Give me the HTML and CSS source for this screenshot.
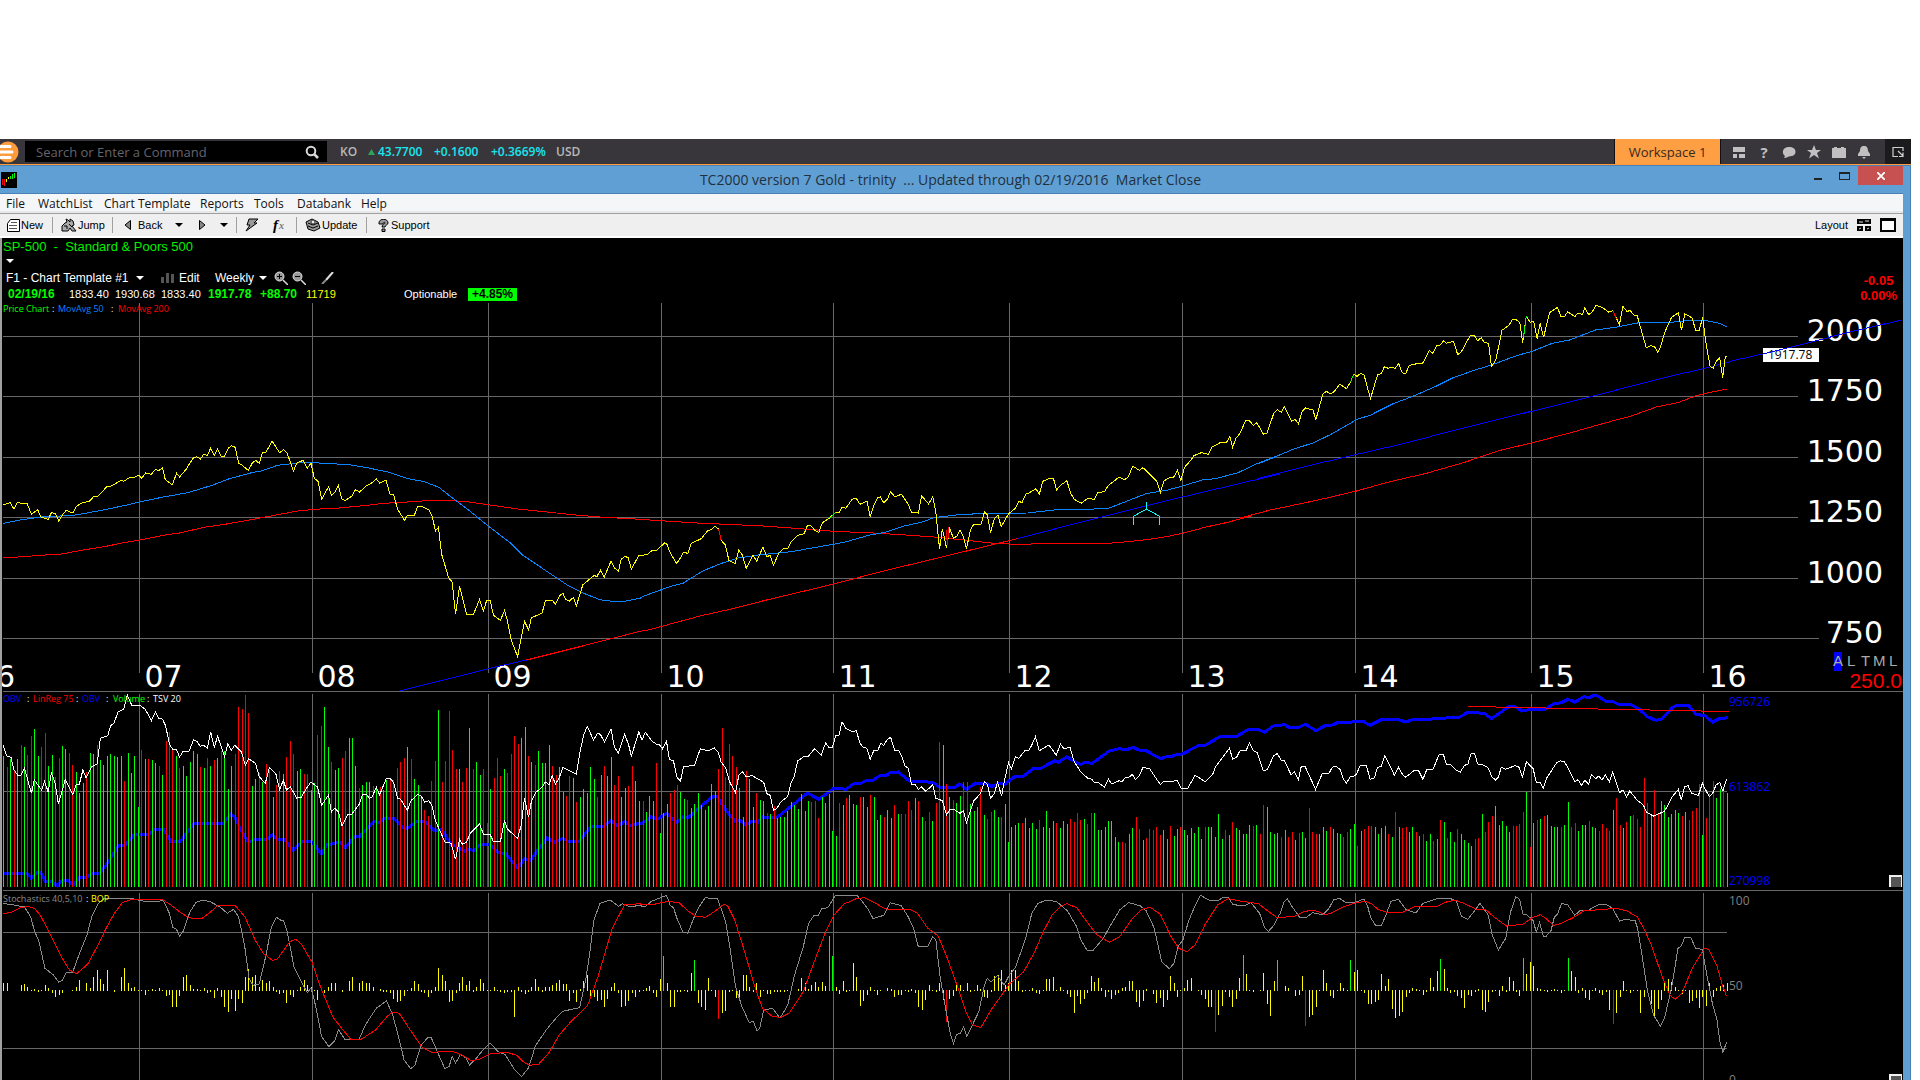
FILE: index.html
```html
<!DOCTYPE html>
<html lang="en">
<head>
<meta charset="utf-8">
<title>TC2000 version 7 Gold</title>
<link rel="stylesheet" href="styles.css">
</head>
<body>
<div class="app">
  <header class="topbar">
    <svg class="logo" viewBox="0 0 25 25"><circle cx="8" cy="13" r="10.5" fill="#fe9b3c"/><path d="M1 7.500H10M0 13H12M1 18.500H10" stroke="#fff" stroke-width="3" stroke-linecap="round"/></svg>
    <div class="search">
      <input type="text" aria-label="Command" placeholder="Search or Enter a Command">
      <svg viewBox="0 0 14 14" width="14" height="14"><circle cx="6" cy="6" r="4.300" fill="none" stroke="#d8d8d8" stroke-width="2"/><path d="M9 9l4 4" stroke="#d8d8d8" stroke-width="2.500"/></svg>
    </div>
    <div class="ticker">
      <span class="sym">KO</span>
      <svg viewBox="0 0 7 6" width="7" height="6"><path d="M0 6L3.500 0 7 6z" fill="#2fa35c"/></svg>
      <span>43.7700</span><span>+0.1600</span><span>+0.3669%</span><span class="sym">USD</span>
    </div>
    <button class="workspace">Workspace 1</button>
    <nav class="tools">
      <button aria-label="Panels"><svg viewBox="0 0 14 14"><path d="M1 2h12v5H1zM1 9h4v4H1zM7 9h6v4H7z"/></svg></button>
      <button aria-label="Help"><b>?</b></button>
      <button aria-label="Chat"><svg viewBox="0 0 14 14"><path d="M7 2c4 0 6.500 2 6.500 4.800S11 11.500 7 11.500c-1 0-2 1.500-5 1.500 1-1 1-2 .5-2.500C-.5 8 .5 2 7 2z"/></svg></button>
      <button aria-label="Favourites"><svg viewBox="0 0 14 14"><path d="M7 0l2 5h5l-4 3 2 5.500-5-3.500-5 3.500L4 8 0 5h5z"/></svg></button>
      <button aria-label="Briefcase"><svg viewBox="0 0 14 14"><path d="M0 3h2V2h3v1h4V2h3v1h2v10H0z"/></svg></button>
      <button aria-label="Alerts"><svg viewBox="0 0 14 14"><path d="M7 1c3 0 4 2 4 5l2 3v2H1V9l2-3c0-3 1-5 4-5zM5 12h4l-2 2z"/></svg></button>
    </nav>
    <button class="popout" aria-label="Pop out"><svg viewBox="0 0 12 12" width="12" height="12"><path d="M6 10.500H1v-9h10V5M6 5l5 5M11 6.500V10.500H7" fill="none" stroke="#d0d0d0" stroke-width="1.200"/></svg></button>
  </header>

  <div class="window">
    <div class="titlebar">
      <svg class="appicon" viewBox="0 0 16 16" width="16" height="16"><path d="M0 0h16v16H0z"/><path d="M1.500 7v6M3.500 7v7" stroke="red"/><path d="M5.500 7v3M7.500 5v2" stroke="#ff0"/><path d="M9.500 4v3M11.500 2v5M13.500 1v5" stroke="#0f0"/></svg>
      <h1>TC2000 version 7 Gold - trinity &nbsp;... Updated through 02/19/2016 &nbsp;Market Close</h1>
      <div class="winbtns">
        <button aria-label="Minimize"><i class="min"></i></button>
        <button aria-label="Maximize"><i class="max"></i></button>
        <button class="close" aria-label="Close"><svg viewBox="0 0 8 8" width="8" height="8"><path d="M0 0l8 8M8 0L0 8" stroke="#fff" stroke-width="1.800"/></svg></button>
      </div>
    </div>

    <div class="client">
      <nav class="menubar">
        <a href="#">File</a><a href="#">WatchList</a><a href="#">Chart Template</a><a href="#">Reports</a><a href="#">Tools</a><a href="#">Databank</a><a href="#">Help</a>
      </nav>
      <div class="toolbar">
        <button><svg viewBox="0 0 13 13" width="13" height="13"><path d="M3.500 .5h9v12h-12v-8z" fill="#fff" stroke="#000"/><path d="M4 3.500h6M2 6.500h8M2 9.500h8" stroke="#555"/></svg>New</button>
        <button class="sep"><svg viewBox="0 0 16 14" width="16" height="14"><path d="M1 13V8l3-3 2-1-1-3 2 1 2 2 0-3 3 2 1 4-2 1 4 5h-4l-2-3-2 3z" fill="#aaa" stroke="#000"/><path d="M3 8h3v3M8 6l3 3" stroke="#000" fill="none"/></svg>Jump</button>
        <button class="sep back"><svg viewBox="0 0 7 10" width="7" height="10"><path d="M6.500 .5v9L1 5z" fill="#888" stroke="#000"/></svg>Back</button>
        <button aria-label="Back history"><i class="caret"></i></button>
        <button aria-label="Forward"><svg viewBox="0 0 7 10" width="7" height="10"><path d="M.5 .5v9L6 5z" fill="#888" stroke="#000"/></svg></button>
        <button aria-label="Forward history"><i class="caret"></i></button>
        <button class="sep" aria-label="Scan"><svg viewBox="0 0 14 14" width="14" height="14"><path d="M4 1h9L9 5h3L1 13l4-6H2z" fill="#999" stroke="#000"/></svg></button>
        <button class="fx" aria-label="Formula">f<small>x</small></button>
        <button class="sep"><svg viewBox="0 0 16 14" width="16" height="14"><path d="M1 4l6-3 6 3 2 6-6 3-6-2z" fill="#999" stroke="#000"/><path d="M3 5l5 2 5-2M3 8l5 2 5-2" fill="none" stroke="#000"/><circle cx="8" cy="4" r="2" fill="#eee" stroke="#333"/></svg>Update</button>
        <button class="sep support"><svg viewBox="0 0 11 13" width="11" height="13"><path d="M1 4c0-5 9-5 9 0 0 2-3 2-3 4H4c0-3 3-3 3-4s-2-1-2 1H1zM4 10h3v2.500H4z" fill="#999" stroke="#000"/></svg>Support</button>
        <button class="layout">Layout <svg viewBox="0 0 14 12" width="14" height="12"><path d="M0 0h14v5H0zM0 7h6v5H0zM8 7h6v5H8z"/><path d="M2 3h4M8 2h4M2 10l2-1M10 10l2-1" stroke="#ddd"/></svg><i class="pane"></i></button>
      </div>

      <main class="charts">
        <section class="head">
          <div>
            <h2>SP-500 &nbsp;- &nbsp;Standard &amp; Poors 500</h2>
            <div class="more"><i class="caret"></i></div>
            <div class="row controls">
              <button>F1 - Chart Template #1</button><i class="caret"></i>
              <svg viewBox="0 0 14 10" width="14" height="10"><path d="M0 4h3v6H0zM5 0h3v10H5zM10 1h3v9h-3z" fill="#555"/></svg>
              <button>Edit</button><button>Weekly</button><i class="caret"></i>
              <svg viewBox="0 0 14 14" width="14" height="14"><circle cx="5.500" cy="5.500" r="4.500" fill="#999" stroke="#ddd"/><path d="M3 5.500h5M5.500 3v5" stroke="#000"/><path d="M9 9l5 5" stroke="#ddd" stroke-width="1.500"/></svg>
              <svg viewBox="0 0 14 14" width="14" height="14"><circle cx="5.500" cy="5.500" r="4.500" fill="#999" stroke="#ddd"/><path d="M3 5.500h5" stroke="#000"/><path d="M9 9l5 5" stroke="#ddd" stroke-width="1.500"/></svg>
              <svg viewBox="0 0 13 12" width="13" height="12"><path d="M12 0L5 8" stroke="#ddd" stroke-width="2"/><path d="M5 8l-4 4" stroke="#888" stroke-width="2"/></svg>
            </div>
            <div class="row quote">
              <b>02/19/16</b><span>1833.40</span><span>1930.68</span><span>1833.40</span><b>1917.78</b><b>+88.70</b><span class="vol">11719</span><span>Optionable</span><strong>+4.85%</strong>
            </div>
          </div>
          <div class="change"><span>-0.05</span><span>0.00%</span></div>
        </section>
        <svg id="price" class="plot" viewBox="2 303 1901 389"></svg>
        <svg id="volume" class="plot" viewBox="2 692 1901 199"></svg>
        <svg id="stoch" class="plot" viewBox="2 891 1901 197"></svg>
      </main>
    </div>
  </div>
</div>
<script src="chart.js"></script>
</body>
</html>
```
FILE: styles.css
```css
* { box-sizing: border-box; }
body {
  margin: 0;
  height: 100vh;
  overflow: hidden;
  background: #fff;
  font: 12px "Liberation Sans", Arial, sans-serif;
}
h1, h2 { margin: 0; font-weight: normal; }
button { margin: 0; padding: 0; border: 0; background: none; font: inherit; color: inherit; text-align: left; white-space: nowrap; }
.app { padding: 139px 9px 0 0; }

.topbar {
  display: flex;
  height: 26px;
  background: #38363b;
  border-bottom: 1px solid #fe9b3c;
  font: 12px "Open Sans", "Noto Sans", sans-serif;
}
.logo { width: 25px; height: 25px; }
.search {
  display: flex;
  align-items: center;
  width: 302px;
  height: 21px;
  margin-top: 2px;
  padding: 0 8px 0 11px;
  background: #000;
}
.search input {
  flex: 1;
  min-width: 0;
  padding: 0;
  border: 0;
  background: none;
  color: #aaa;
  font: 13px "Open Sans", sans-serif;
}
.search input::placeholder { color: #66646c; }
.ticker {
  flex: 1;
  display: grid;
  grid-template-columns: 28px 10px 56px 57px 65px auto;
  align-items: center;
  padding-left: 13px;
  color: #19e6ef;
  font-weight: 600;
}
.sym { color: #b8b8b8; }
.workspace {
  width: 107px;
  border-right: 1px solid #111;
  border-left: 1px solid #111;
  background: #fe9f43;
  color: #38281c;
  font-size: 13px;
  text-align: center;
}
.tools { display: flex; align-items: center; gap: 11px; width: 164px; padding-left: 11px; }
.tools button { width: 14px; height: 20px; color: #c0c0c0; text-align: center; font-size: 15px; line-height: 20px; }
.tools svg { display: block; width: 14px; height: 20px; fill: #c0c0c0; }
.popout { display: flex; align-items: center; justify-content: center; width: 26px; background: #1b1a1d; }

.window { padding-right: 7px; background: #609fd3; border-right: 1px solid #4a80b4; border-top: 1px solid #4a80b4; }
.titlebar { display: flex; height: 28px; border-bottom: 1px solid #4a80b4; }
.appicon { margin: 6px 0 0 1px; }
.titlebar h1 { flex: 1; padding-left: 80px; color: #22303e; font: 14px/27px "Open Sans", sans-serif; text-align: center; }
.winbtns { display: flex; }
.winbtns button { display: flex; align-items: center; justify-content: center; width: 27px; height: 19px; }
.winbtns .close { width: 45px; background: #c75050; }
.min { width: 8px; height: 2px; margin-top: 6px; background: #222; }
.max { width: 11px; height: 8px; border: 1px solid #222; border-top-width: 2px; }

.client { background: #efefef; }
.menubar {
  display: grid;
  grid-template-columns: 32px 66px 96px 54px 43px 64px auto;
  height: 19px;
  padding-left: 6px;
  overflow: hidden;
  background: #f4f6f8;
  border-bottom: 2px solid #e8e8e8;
  font: 12px/20px "Open Sans", sans-serif;
}
.menubar a { color: #111; text-decoration: none; white-space: nowrap; }
.toolbar {
  display: grid;
  grid-template-columns: 45px 60px 63px 24px 21px 16px 37px 23px 70px 1fr auto;
  align-items: center;
  height: 25px;
  padding: 0 7px;
  border-top: 1px solid #a0a0a0;
  border-bottom: 2px solid #fff;
  font-size: 11px;
}
.toolbar button { display: flex; align-items: center; gap: 1px; height: 16px; }
.toolbar .sep { padding-left: 8px; border-left: 1px solid #a0a0a0; }
.toolbar .back { gap: 7px; padding-left: 11px; }
.toolbar .support { gap: 2px; padding-left: 11px; }
.toolbar .fx { font: italic bold 15px "Liberation Serif", serif; }
.fx small { font-size: 10px; color: #777; }
.toolbar .layout { gap: 9px; }
.pane { width: 16px; height: 14px; border: 2px solid #000; border-top-width: 3px; background: #fff; }
.caret { width: 0; height: 0; border: 4px solid transparent; border-top: 4px solid currentColor; border-bottom: 0; }

.charts { background: #000; border-left: 2px solid #a0a0a0; color: #fff; }
.head { display: flex; justify-content: space-between; height: 65px; }
.head h2 { padding-left: 1px; color: #00f000; font-size: 13px; line-height: 17px; }
.more { display: flex; height: 14px; padding: 4px 0 0 4px; }
.row { display: grid; align-items: center; white-space: nowrap; }
.controls { grid-template-columns: 130px 25px 18px 36px 44px 15px 18px 29px auto; justify-content: start; height: 18px; padding-left: 4px; }
.quote { grid-template-columns: 61px 46px 46px 47px 52px 46px 98px 64px auto; justify-content: start; height: 14px; padding-left: 6px; font-size: 11px; }
.quote b { color: #0f0; font-size: 12px; }
.quote .vol { color: #ff0; }
.quote strong { padding: 0 4px; background: #0f0; color: #000; font-size: 12px; line-height: 13px; }
.change { display: flex; flex-direction: column; align-items: center; padding: 35px 6px 0 0; color: #f00; font-size: 13px; font-weight: bold; line-height: 15px; }
.plot { display: block; width: 100%; height: auto; overflow: hidden; }

.grid { stroke: #686868; fill: none; }
.line { fill: none; stroke-width: 1; }
.axis { font: 30px "DejaVu Sans", Verdana, sans-serif; fill: #fff; }
.legend { font: 9px "Open Sans", sans-serif; fill: #fff; }
.scale { font: 12px "Open Sans", sans-serif; }
.mode { font: 15px "Liberation Sans", Arial, sans-serif; fill: #aaa; }
.step { font: 21px "Liberation Sans", Arial, sans-serif; fill: #f00; }
```
FILE: chart.js
```js
const NS = 'http://www.w3.org/2000/svg';
const YEARS = [139.5, 312.5, 488.5, 661.5, 833.5, 1009.5, 1182.5, 1355.5, 1531.5, 1703.5];

function add(parent, name, attrs, text) {
  const el = document.createElementNS(NS, name);
  for (const k in attrs) el.setAttribute(k, attrs[k]);
  if (text !== undefined) el.textContent = text;
  document.getElementById(parent).appendChild(el);
  return el;
}
const grid = (id, d) => add(id, 'path', { d, class: 'grid', 'shape-rendering': 'crispEdges' });

// Samples are stored per block: origin of the block and samples per pixel on x; y is in thirds of a pixel.
const B = {
  a: [0, 300, 2.45], b: [640, 440, 2.45], c: [1240, 290, 2.306],
  d: [0, 680, 2.45], e: [640, 680, 2.45], f: [1280, 680, 2.45]
};
function pts(blocks) {
  const out = [];
  for (const k in blocks) {
    const [ox, oy, s] = B[k];
    blocks[k].trim().split(/\s+/).forEach(p => {
      const [x, y] = p.split(',').map(Number);
      out.push((ox + x / s).toFixed(1) + ',' + (oy + y / 3).toFixed(1));
    });
  }
  return out.join(' ');
}
const line = (id, colour, blocks, width = 1) =>
  add(id, 'polyline', { points: pts(blocks), class: 'line', stroke: colour, style: 'stroke-width:' + width, 'shape-rendering': 'crispEdges' });

/* ---------- price ---------- */
grid('price', YEARS.map(x => `M${x} 303V673`).join('') +
  'M3 336.500H1798M3 396.500H1798M3 457.500H1798M3 517.500H1798M3 578.500H1798M3 638.500H1819M3 691.500H1903');

[[2000, 341], [1750, 401], [1500, 462], [1250, 522], [1000, 583], [750, 643]].forEach(([t, y]) =>
  add('price', 'text', { x: 1883, y, 'text-anchor': 'end', class: 'axis' }, t));
['6', '07', '08', '09', '10', '11', '12', '13', '14', '15', '16'].forEach((t, i) =>
  add('price', 'text', { x: i ? YEARS[i - 1] + 5 : -4, y: 687, class: 'axis' }, t));

add('price', 'rect', { x: 1763, y: 348, width: 56, height: 14, fill: '#fff' });
add('price', 'text', { x: 1768, y: 359, class: 'scale' }, '1917.78');

line('price', '#f00', {
  a: '8,774 45,771 100,766 150,762 200,751 260,739 300,729 342,720 400,706 440,699 500,682 560,671 620,658 680,644 730,633 770,628 830,624 900,616 940,610 1010,605 1060,601 1110,602 1150,606 1200,615 1270,627 1340,636 1410,645 1480,652 1568,658',
  b: '60,243 140,249 230,254 290,257 370,264 474,274 570,279 640,284 720,291 800,301 860,309 920,313 1000,311 1110,312 1170,308 1240,299 1290,290 1329,280 1390,260 1440,247 1500,227',
  c: '0,684 70,660 140,641 190,627 266,604 340,577 430,550 520,516 600,481 672,459 760,429 850,396 900,379 960,351 1010,338 1050,318 1080,308 1123,297'
});
line('price', '#0a84ff', {
  a: '8,670 50,660 100,651 180,646 240,633 300,618 342,606 400,591 460,578 520,556 560,537 620,517 640,513 680,496 730,489 765,487 800,491 850,493 900,503 950,516 1000,536 1040,545 1075,562 1115,600 1150,632 1200,682 1250,728 1280,765 1330,806 1390,855 1430,880 1470,899 1500,904 1530,904 1568,895',
  b: '0,473 30,459 80,437 105,430 155,392 200,370 240,354 290,345 370,335 440,320 500,307 560,286 600,277 650,257 690,247 720,233 780,224 850,220 950,219 1020,209 1100,208 1150,204 1200,180 1240,161 1290,151 1329,138 1380,119 1410,116 1465,98 1510,72 1568,44',
  c: '40,522 70,507 120,479 170,458 210,433 270,388 300,376 350,343 400,318 450,290 490,264 540,241 580,225 640,196 672,185 720,160 760,150 820,120 870,111 920,98 980,99 1030,92 1080,93 1105,100 1123,110'
});
line('price', '#00f', { a: '980,1172 1130,1127 1200,1105 1290,1080' });
line('price', '#f00', { a: '1290,1080 1430,1037 1568,994', b: '20,570 150,527 220,508 310,480 400,454 474,432 600,392 760,345 870,312 925,296' });
line('price', '#00f', { b: '925,296 1050,256 1130,232 1200,209 1329,171 1430,142 1568,102', c: '40,566 172,523 266,494 380,460 464,431 600,387 672,364 800,323 880,296 1000,256 1069,236 1150,208 1206,192 1300,162 1400,128 1526,90' });
line('price', '#ff0', {
  a: '8,614 25,608 34,627 43,607 52,610 66,609 77,643 92,629 101,652 118,658 126,638 135,640 144,663 153,645 162,631 178,639 188,618 204,607 218,605 230,589 238,591 262,560 273,558 297,541 303,544 316,534 330,532 340,526 347,535 357,519 371,523 381,508 389,512 398,503 405,539 422,554 433,520 440,531 456,508 465,490 474,473 482,470 491,477 499,463 508,466 516,445 525,466 533,448 542,469 550,469 560,444 567,437 576,442 585,490 592,494 608,511 618,490 626,481 635,490 643,458 651,457 667,424 685,458 695,449 703,458 719,513 727,490 742,481 753,504 762,490 770,535 779,544 788,598 805,560 812,585 820,578 829,557 838,598 846,601 862,589 871,569 881,576 898,557 912,548 922,537 930,549 946,541 956,585 964,583 974,628 991,661 998,646 1015,646 1023,620 1036,621 1050,629 1058,645 1067,693 1074,682 1082,762 1099,833 1108,846 1116,942 1126,859 1143,943 1160,943 1175,898 1184,933 1192,903 1201,902 1209,946 1226,961 1236,932 1243,960 1252,1018 1268,1070 1285,964 1295,989 1302,953 1328,940 1336,903 1353,901 1361,912 1371,887 1379,880 1386,898 1395,903 1405,892 1412,918 1428,854 1455,827 1463,829 1471,811 1480,832 1497,784 1505,803 1515,814 1522,778 1531,769 1539,773 1547,808 1565,766',
  b: '0,346 18,344 30,331 41,331 60,309 65,310 74,338 90,371 100,352 106,337 117,340 126,310 150,296 166,272 175,269 183,259 192,266 199,301 209,315 218,362 233,371 242,331 251,345 260,385 277,346 286,364 301,322 311,350 319,346 327,376 340,340 352,325 362,325 370,307 387,286 402,281 410,257 418,256 428,271 438,277 447,248 462,236 480,217 488,217 495,202 504,205 520,178 530,175 539,193 556,183 564,230 574,193 582,174 589,170 597,188 606,178 614,155 624,170 641,163 657,193 665,217 682,219 690,167 707,192 717,170 725,218 734,328 741,266 751,325 759,266 768,295 776,289 784,269 792,289 800,326 810,268 818,252 835,255 844,215 851,225 859,278 868,236 877,226 885,260 903,221 920,205 928,184 936,188 945,163 954,158 970,146 978,163 987,124 1003,115 1013,116 1021,150 1029,137 1046,122 1055,160 1064,178 1081,190 1097,175 1113,178 1121,158 1138,155 1147,137 1173,112 1188,119 1197,109 1207,79 1224,91 1232,83 1248,101 1266,124 1275,157 1283,124 1293,115 1307,112 1317,91 1325,122 1334,82 1350,60 1357,47 1375,38 1392,43 1402,21 1420,9 1437,7 1445,-10 1452,22 1460,-5',
  c: '0,430 13,392 21,391 31,406 39,398 54,433 62,430 78,370 86,359 95,367 102,350 119,394 127,388 135,401 143,365 151,354 159,357 168,359 175,389 183,350 191,312 199,304 208,311 215,308 230,283 246,296 255,275 262,253 270,259 278,250 286,254 301,326 317,255 326,250 333,230 342,235 350,232 358,235 366,221 374,248 382,251 390,227 398,223 421,220 437,181 444,190 454,167 460,168 469,153 476,160 492,154 502,194 510,186 531,136 541,137 548,152 556,143 564,158 573,160 580,229 590,210 604,121 620,106 628,89 637,89 645,97 652,158 660,79 669,97 677,94 685,146 692,100 700,142 714,68 732,52 740,79 748,80 756,65 772,80 778,70 790,73 795,54 804,74 812,66 821,46 835,52 850,66 860,62 875,104 883,49 892,64 900,62 908,75 916,77 937,173 947,167 956,170 963,187 970,170 979,129 995,82 1011,68 1018,121 1026,72 1042,83 1051,121 1059,121 1067,82 1075,165 1084,229 1091,235 1099,212 1106,203 1113,263 1119,199 1123,199'
});
line('price', '#f00', { b: '192,266 199,301' });
line('price', '#f00', { b: '751,270 753,316 757,262' });
line('price', '#0f0', { b: '464,235 480,217' });
line('price', '#0f0', { c: '654,140 660,79' });
line('price', '#0f0', { c: '255,275 262,253' });
line('price', '#f00', { c: '860,62 868,86' });
line('price', '#0ff', { b: '1209,254 1209,229 1241,207 1241,187 1241,207 1273,229 1273,254' });

function legend(id, y, items) {
  items.forEach(([x, t, c]) => add(id, 'text', { x, y, class: 'legend', fill: c, style: 'fill:' + c }, t));
}
legend('price', 312, [[3, 'Price Chart', '#0f0'], [52, ':', '#fff'], [58, 'MovAvg 50', '#0a84ff'], [111, ':', '#fff'], [118, 'MovAvg 200', '#f00']]);
add('price', 'rect', { x: 1834, y: 652, width: 8, height: 19, fill: '#00f' });
[['A', 1833], ['L', 1847], ['T', 1861], ['M', 1873], ['L', 1889]].forEach(([t, x]) => add('price', 'text', { x, y: 666, class: 'mode' }, t));
add('price', 'text', { x: 1902, y: 688, 'text-anchor': 'end', class: 'step' }, '250.0');

/* ---------- bars ---------- */
const SPAN = [[3.3, 638.5], [642.5, 1277], [1281.3, 1726.6]];
function bars(id, list, draw) {
  list.forEach((s, n) => {
    const items = s.trim().split(/\s+/), [x0, x1] = SPAN[n];
    items.forEach((v, i) => {
      const x = Math.round(x0 + (x1 - x0) * i / (items.length - 1));
      const [top, bottom, fill] = draw(v);
      if (bottom > top) add(id, 'rect', { x, y: top, width: 1, height: bottom - top, fill, 'shape-rendering': 'crispEdges' });
    });
  });
}

/* ---------- volume ---------- */
grid('volume', YEARS.map(x => `M${x} 694V887`).join(''));
line('volume', '#00f', {
  d: '8,579 65,579 77,595 92,576 101,580 112,605 126,603 140,618 153,600 165,600 180,615 195,592 212,594 225,580 243,580 262,552 290,497 305,497 330,463 365,463 378,448 400,448 420,485 442,485 474,431 545,432 565,403 575,410 590,450 608,487 625,477 655,477 667,465 680,478 697,478 718,510 740,484 765,486 788,522 800,495 832,487 846,503 870,468 882,468 915,425 930,427 945,413 965,416 990,446 1002,442 1020,425 1040,424 1065,452 1082,447 1105,494 1120,500 1140,515 1150,507 1160,512 1175,495 1200,493 1220,518 1238,520 1268,564 1285,537 1300,540 1340,474 1360,487 1378,475 1395,485 1418,485 1448,439 1480,438 1497,422 1513,437 1530,425 1545,437 1566,430',
  e: '5,430 28,410 42,418 65,400 90,427 105,411 118,413 150,378 180,348 190,351 210,390 232,423 245,421 260,436 275,423 288,427 300,411 335,413 365,384 410,339 438,358 475,325 505,328 525,310 540,310 555,301 570,301 590,286 600,288 615,277 632,276 660,303 692,303 720,309 735,323 770,324 783,311 800,328 822,309 850,310 860,320 880,310 893,313 920,288 940,288 965,264 980,266 1015,243 1025,247 1045,231 1080,254 1090,247 1108,250 1150,213 1175,206 1190,210 1207,202 1222,210 1240,212 1275,236 1292,229 1300,230 1315,223 1329,222 1370,196 1385,196 1420,170 1462,169 1492,147 1515,148 1530,157 1550,139 1566,135',
  f: '0,136 11,134 20,141 45,142 63,133 88,152 112,136 122,138 145,126 165,129 180,125 204,124 220,136 250,118 290,119 308,126 325,118 370,118 378,115 395,116 425,111 437,113 460,97 500,100 518,116 560,80 575,79 592,93 620,87 650,87 672,71 690,68 705,57 722,66 745,50 757,53 773,44 802,66 815,64 828,72 858,73 880,88 900,110 920,121 935,117 962,82 975,75 1000,75 1020,104 1040,106 1060,127 1075,116 1098,113'
}, 3);
grid('volume', 'M3 791.500H1727M3 890.500H1903');
bars('volume', [
  'g228 r262 g236 r270 g236 r195 g201 r225 r168 g147 g228 r201 r159 g258 g225 r290 r234 g198 g207 r220 r255 g276 g339 g310 r275 g219 g222 r195 g240 g255 g228 g222 g228 g231 g228 r303 g219 g279 g228 g380 r210 g237 r237 g240 g249 r258 g285 r183 r156 r205 g228 r264 g258 g288 g246 g213 g222 r261 g264 r234 g258 r240 g234 r213 g213 g327 g258 r222 r81 r87 r45 r99 g318 g297 r280 g306 r252 r270 g351 r315 r273 g282 r231 r183 r222 g273 g267 r282 r282 g330 g310 r165 r138 g81 g201 r246 g270 g264 r234 r213 g174 g174 g258 r324 g315 g306 g306 r318 g320 r320 g330 g300 r300 r300 r264 r246 r234 g201 r237 g297 g315 g350 r390 r408 r303 r243 g90 r306 r243 r93 r210 r267 g267 r306 r264 g144 r267 g246 g285 r267 r430 g327 r294 r234 r288 g267 r279 r222 r168 r192 g174 g141 r228 g246 r255 g213 g249 g249 g195 r258 r285 g261 g335 r348 r288 g294 r366 g351 g327 g339 g261 g297 r351 g285 r258 g288 g231 r315 r288 g351 g324 r318 r258 g303 g363',
  'r363 g396 g348 g363 r249 g459 g399 g372 r339 r330 r315 g336 g357 r360 g384 g372 g339 g376 g390 g378 g312 g333 r267 r144 r291 r192 r228 r261 g324 g411 r273 g297 g381 r339 g360 g363 r399 g402 r378 g414 g411 g411 g393 g366 g375 g387 g342 g393 g363 r366 r363 r414 g351 g369 g342 g453 g468 r369 g375 r354 g345 g372 g375 r351 g351 g381 r345 g351 g420 g405 r411 g390 g414 r375 g402 r402 r402 r363 r390 g354 r363 g411 r423 r396 g423 r369 r186 g195 r312 g351 r360 g369 g348 r306 r306 g372 g393 g381 r321 g405 r417 r396 g390 g411 r411 g372 g486 g441 g435 g429 r429 g414 g444 g429 g447 r420 g441 g393 g444 g423 r429 g444 g423 g432 r417 r426 r399 r420 g417 r432 r399 g399 g450 g450 g441 g423 g423 g471 g486 r486 r489 g462 g444 r411 r447 g480 r474 r447 r450 r441 r465 g450 g477 r438 g468 g447 r441 g450 g465 g444 g459 g441 g477 r441 g441 g441 g471 g402 g477 r450 g465 r426 g444 g450 g462 g462 g435 r438 g435 r462 r375 g381 g456 g462 g459',
  'r471 g450 r471 r456 g480 r459 g456 g474 r384 r456 r462 g462 g441 g453 r441 g447 g459 g462 r471 r456 g447 g432 r498 g453 r447 r438 r438 g441 g462 g444 g438 r462 g471 r396 g441 r444 r441 g456 g441 r456 g468 r462 g483 g462 r483 g477 r420 g426 r474 g456 g486 r447 g462 g480 g489 g498 r477 r474 g402 r456 r426 r408 g378 g435 g423 g438 g456 r438 r438 r432 r396 g336 r501 g429 r420 g417 r408 g405 g438 g441 g441 r441 g435 g366 r441 r429 g453 g435 g435 r423 g441 g444 r453 r432 r444 r453 g390 r354 r435 g444 r426 g408 r405 r417 r441 r294 r369 g405 r330 r400 g363 g375 g411 g402 g390 g399 r408 g396 r420 r393 r384 r312 g465 r414 r340 r303 g354 g327 r333 g339'
], v => [680 + Math.round(v.slice(1) / 3), 887, v[0] === 'g' ? '#0f0' : '#f00']);
line('volume', '#f00', { f: '461,79 528,79 530,82 650,83 652,85 778,86 780,88 905,89 907,91 1030,92 1032,94 1100,94' }, 1);
line('volume', '#fff', {
  d: '8,196 16,227 27,232 34,269 43,285 52,285 60,265 77,340 84,300 102,330 109,304 118,336 126,279 135,309 143,372 153,330 160,298 178,344 187,312 194,314 203,270 211,294 225,260 238,252 246,175 264,167 271,137 279,130 289,96 303,87 312,45 323,76 345,78 356,88 371,122 381,95 389,115 398,117 406,138 415,193 423,208 432,208 440,231 449,213 463,214 474,180 483,185 491,199 499,196 508,205 516,155 525,202 533,169 550,230 558,193 567,210 575,196 592,217 601,256 609,236 626,250 635,290 650,310 660,262 676,282 685,329 694,301 702,330 711,320 727,354 738,352 753,321 762,306 778,321 788,376 805,345 812,396 820,385 829,396 838,439 852,404 862,402 881,371 888,344 898,344 905,355 912,350 922,321 930,345 946,297 956,296 964,307 974,355 981,357 998,391 1007,362 1023,343 1032,348 1040,366 1050,362 1058,375 1067,423 1090,486 1105,490 1116,538 1126,478 1133,493 1143,486 1152,460 1175,432 1184,462 1201,464 1209,485 1226,485 1236,421 1243,447 1268,475 1277,436 1285,355 1295,412 1302,364 1312,338 1328,322 1336,306 1345,314 1353,288 1361,313 1371,290 1379,262 1412,282 1422,210 1430,165 1439,139 1454,180 1464,160 1471,163 1481,187 1497,146 1505,200 1515,220 1530,163 1539,190 1547,228 1565,156',
  e: '5,180 13,157 30,184 41,193 47,193 55,206 65,184 72,238 82,243 90,290 99,304 107,259 133,257 148,206 166,213 182,204 192,218 199,247 210,264 219,304 234,339 242,286 251,275 260,290 275,287 303,307 311,341 319,346 327,391 335,386 345,366 362,349 370,310 378,289 386,243 402,229 412,229 428,206 444,226 455,188 463,203 471,203 480,166 488,165 495,125 504,145 521,155 530,152 539,190 547,202 556,205 564,238 573,211 582,212 590,190 597,196 606,178 614,172 624,210 633,210 641,228 649,258 657,264 665,313 674,313 682,328 690,321 700,334 717,315 725,355 741,362 751,404 759,389 768,388 784,400 792,392 800,428 818,362 834,341 844,305 851,313 859,355 868,340 876,307 886,348 893,300 903,248 910,266 920,231 928,235 943,212 952,212 960,195 969,170 978,212 1002,195 1020,226 1030,192 1038,205 1054,203 1063,243 1080,276 1097,295 1106,297 1114,308 1123,308 1138,322 1148,297 1155,312 1174,302 1181,305 1190,292 1198,292 1206,283 1214,299 1224,286 1232,262 1249,267 1275,314 1282,305 1308,303 1317,302 1325,324 1342,325 1360,286 1385,305 1403,283 1410,261 1444,205 1452,237 1462,231 1470,212 1485,212 1493,189 1503,212 1512,218 1527,272 1537,269 1552,228 1561,221',
  f: '3,240 11,242 27,284 35,275 45,300 52,260 61,258 87,328 104,280 120,280 128,262 137,259 147,268 155,296 163,310 172,290 180,290 187,283 197,255 212,258 221,298 231,294 239,262 248,260 257,227 280,285 290,262 300,283 308,292 330,270 340,273 350,298 360,268 374,270 390,223 400,223 408,253 416,252 432,270 442,276 452,256 460,253 468,221 477,221 484,252 500,256 510,264 519,290 528,300 535,292 542,262 552,268 576,257 586,262 594,291 604,245 620,266 628,306 637,306 645,325 653,295 678,248 687,242 697,246 705,262 722,305 730,299 739,316 747,301 756,312 763,284 773,296 781,288 789,300 797,285 807,305 815,275 824,308 832,338 840,330 849,352 857,333 874,359 890,375 898,397 915,408 942,394 950,376 960,352 976,328 983,360 991,320 1000,317 1008,340 1025,346 1035,310 1042,328 1052,350 1060,340 1068,316 1077,307 1085,333 1094,297'
});
legend('volume', 702, [[3, 'OBV', '#00f'], [27, ':', '#fff'], [33, 'LinReg 75', '#f00'], [76, ':', '#fff'], [82, 'OBV', '#00f'], [106, ':', '#fff'], [113, 'Volume', '#0f0'], [147, ':', '#fff'], [153, 'TSV 20', '#fff']]);
[['956726', 706], ['613862', 791], ['270998', 885]].forEach(([t, y]) => add('volume', 'text', { x: 1729, y, class: 'scale', fill: '#00f' }, t));
function handle(id, y) {
  add(id, 'rect', { x: 1889, y, width: 13, height: 12, fill: '#f0f0f0' });
  add(id, 'rect', { x: 1891, y: y + 2, width: 10, height: 10, fill: '#555' });
}
handle('volume', 875);

/* ---------- stochastics ---------- */
grid('stoch', YEARS.map(x => `M${x} 893V1088`).join('') + 'M3 932.500H1727M3 1048.500H1727');
bars('stoch', [
  '-20 -20 0 0 0 -14 -17 -8 4 -3 7 3 -14 -5 10 22 14 10 0 0 2 -8 -31 0 -20 -6 -40 -61 -34 -17 -61 0 6 0 -38 -67 -20 -5 -10 3 4 16 3 -3 2 -5 4 19 14 50 52 19 -38 -44 -14 -3 -4 2 -7 10 7 25 -7 22 52 65 28 62 28 38 -38 -62 -40 -44 -10 -29 -22 -26 -8 7 13 10 40 14 22 3 -10 -29 -14 -8 4 31 -3 10 -10 -20 -20 0 7 0 -26 -38 0 -20 -26 -22 -20 -8 0 -2 5 7 8 28 35 34 19 2 -5 -26 -17 7 10 22 8 -10 -65 -44 -26 35 34 8 -22 -38 -14 -28 7 -8 -34 -22 3 2 -10 3 5 10 5 7 82 -8 7 13 5 -10 -34 -8 5 -10 -10 -16 -20 -29 -17 -17 34 10 35 -4 -28 -44 22 22 32 31 50 28 -8 -20 8 50 49 34 10 20 7',
  '2 -7 -13 10 20 -32 -103g -20 52 52 7 7 3 7 -52 -91g 40 52 59 -37 4 20 88r 70 64 7 3 25 20 -44 -44 -10 7 -22 20 4 11 13 5 7 7 7 3 -7 0 -3 -37 -20 -3 -14 -25 -10 -25 -13 -163g -103g -10 13 -28 7 4 -82 -40 49 32 14 -10 2 16 2 0 -7 -4 20 14 16 2 5 -4 10 52 59 31 -16 2 7 -20 31 97r 28 19 -16 -14 2 -22 7 2 -16 -4 22 25 5 -43 -46 -61 -16 -22 -61 -61 -28 7 3 2 -7 10 13 2 -32 -32 -40 2 -10 4 13 22 70 19 43 28 10 -43 -25 -37 -5 20 7 28 16 10 -7 -10 -28 -28 37 52 34 -4 0 13 40 25 52 31 -43 -22 20 4 -7 -31 -37 0 4 16 28 52 52 127r 76 49 7 20 52 28 -37 -106g -49 4 7 0 2 -52 43 79 -28 -91g',
  '0 -13 -7 0 19 16 -43 109r 82 76 52 2 -61 -22 19 25 3 -22 -7 4 -91g -55 -61 2 10 43 43 37 31 -49 -13 -34 58 85 79 67 22 10 -7 -4 3 16 7 -37 -10 -58 -94g -64 -7 10 5 19 25 55 16 19 5 -4 61 67 37 7 2 19 -13 7 -40 -28 7 19 -97g -49 -85 -73 -7 -4 4 5 4 -4 4 10 4 -97g -58 -40 10 -7 25 31 4 -7 10 16 7 61 103r 70 22 -28 3 10 2 2 70 22 4 43 82 58 31 -22 -34 -25 -10 2 13 4 40 34 25 55 22 49 -20 22 -7 -13 -14 -22'
], v => {
  const h = Math.round(parseInt(v, 10) / 3), c = v.endsWith('g') ? '#0f0' : v.endsWith('r') ? '#f00' : '#ff0';
  return h < 0 ? [990 + h, 991, c] : [990, 990 + h, c];
});
line('stoch', '#8a8a8a', {
  d: '8,671 25,673 60,681 75,710 85,755 95,782 110,865 130,884 144,907 153,900 163,876 178,876 195,820 213,765 225,710 240,672 255,655 300,656 320,655 333,658 345,662 370,666 400,662 415,700 423,742 432,747 440,768 449,753 465,697 480,667 498,660 515,665 540,682 557,700 572,688 584,710 592,752 601,810 610,895 620,916 635,912 650,835 665,742 677,712 687,720 695,722 703,752 711,800 720,860 736,900 753,938 762,923 770,960 780,1020 788,1070 806,1100 820,1083 829,1049 846,1080 880,1078 895,1035 922,985 947,962 962,1005 974,1060 990,1140 1006,1166 1016,1157 1032,1095 1048,1073 1057,1074 1075,1125 1090,1166 1100,1160 1108,1130 1116,1150 1128,1123 1142,1135 1150,1155 1165,1138 1180,1115 1201,1089 1220,1115 1238,1124 1260,1168 1278,1190 1295,1163 1312,1097 1340,1047 1360,1018 1378,994 1420,983 1435,900 1446,810 1455,720 1470,670 1495,660 1515,679 1525,671 1546,681 1568,675',
  e: '5,679 15,678 28,664 65,646 74,676 82,683 90,713 105,756 117,760 133,710 145,680 160,653 190,657 200,690 210,725 220,800 234,920 250,980 268,1029 277,1023 287,1052 293,1046 303,990 325,985 343,1015 362,975 378,888 400,800 413,730 425,708 437,706 445,687 460,683 478,647 533,648 548,670 560,690 571,716 597,706 613,668 640,677 657,710 670,745 682,801 705,799 717,771 725,780 735,888 751,1000 760,1060 768,1090 776,1063 785,1060 793,1040 801,1069 830,995 844,915 851,895 860,905 876,887 892,915 905,885 920,862 945,775 960,700 975,670 995,661 1020,664 1047,692 1070,740 1080,780 1095,810 1110,811 1135,775 1150,742 1175,690 1197,668 1225,677 1240,692 1260,745 1278,845 1297,866 1308,850 1318,800 1330,780 1345,720 1360,677 1373,646 1393,660 1415,662 1428,653 1441,653 1453,674 1480,677 1497,668 1518,700 1530,742 1540,754 1552,737 1566,705',
  f: '0,702 10,665 18,656 30,680 48,712 66,711 80,698 105,704 120,685 132,658 147,656 162,668 185,667 205,657 215,680 222,713 235,737 248,737 258,710 272,664 290,658 310,690 333,699 350,670 385,656 420,657 432,664 445,709 460,718 475,695 490,670 510,705 520,765 535,810 553,775 565,695 578,650 587,658 595,702 605,704 620,722 628,756 636,728 645,768 652,769 664,752 672,712 680,702 690,670 705,675 722,706 735,692 755,691 780,674 800,674 815,685 832,724 845,718 870,722 876,745 890,850 900,930 915,1005 932,1038 942,1015 960,920 975,805 983,798 992,772 1007,773 1018,805 1035,808 1045,880 1060,975 1070,1015 1078,1085 1085,1118 1094,1087'
});
line('stoch', '#f00', {
  d: '8,700 25,698 50,684 70,679 85,686 100,708 120,757 150,830 170,870 188,881 215,852 240,795 260,745 280,700 300,668 320,659 400,660 420,676 445,700 460,711 475,716 495,715 515,697 535,675 575,675 600,710 625,780 645,820 668,842 680,836 710,785 725,778 740,795 765,848 785,920 815,1010 835,1042 860,1079 885,1078 920,1050 950,1007 962,996 978,1000 1005,1050 1035,1103 1060,1118 1080,1114 1108,1114 1130,1124 1155,1142 1175,1138 1201,1122 1240,1117 1265,1125 1285,1148 1300,1156 1320,1152 1345,1118 1370,1065 1395,1030 1440,975 1465,890 1500,745 1530,675 1568,671',
  e: '5,674 30,674 65,665 95,667 115,690 135,708 160,712 180,697 206,672 215,678 232,720 255,810 280,915 300,985 325,1010 345,1012 365,1000 400,935 430,835 455,755 475,705 500,672 530,656 550,653 580,672 600,686 625,690 660,688 680,700 705,745 730,767 750,825 775,910 800,1000 815,1035 835,1043 860,990 905,912 940,875 965,820 990,750 1010,705 1030,680 1046,671 1070,683 1095,725 1120,765 1150,787 1175,770 1205,718 1230,688 1250,682 1275,703 1300,768 1320,805 1340,815 1360,795 1385,732 1415,675 1441,656 1470,663 1515,671 1535,690 1561,713',
  f: '16,711 35,709 60,694 85,691 110,704 125,700 150,683 185,668 210,664 225,672 240,688 262,697 300,697 330,680 385,679 410,665 430,661 450,670 480,687 505,690 525,712 555,738 595,733 617,714 638,704 652,716 670,736 690,730 720,712 745,692 800,688 820,684 850,693 875,710 890,742 910,795 935,885 955,945 968,958 985,940 1010,865 1040,805 1050,808 1070,855 1085,920 1094,948'
});
legend('stoch', 902, [[3, 'Stochastics 40,5,10', '#8a8a8a'], [86, ':', '#fff'], [91, 'BOP', '#ff0']]);
[['100', 905], ['50', 990], ['0', 1084]].forEach(([t, y]) => add('stoch', 'text', { x: 1729, y, class: 'scale', fill: '#808080' }, t));
handle('stoch', 1074);
```
